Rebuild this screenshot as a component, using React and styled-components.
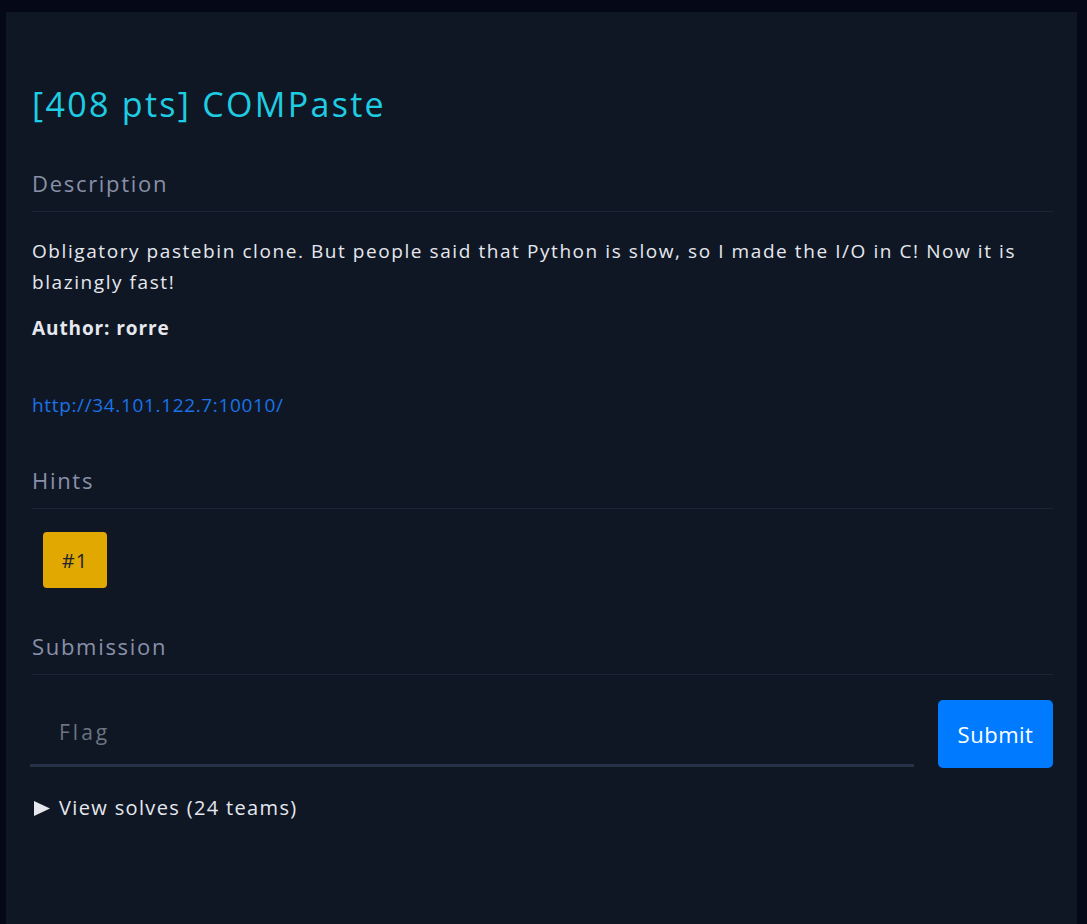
import React from "react";
import styled, { createGlobalStyle } from "styled-components";

const Global = createGlobalStyle`
  html, body { margin: 0; padding: 0; background: #050816; }
  body { font-family: "Open Sans", "Noto Sans", sans-serif; color: #e6e8ee; }
  * { box-sizing: border-box; }
`;

const Page = styled.div`
  padding: 12px 10px 0 6px;
  min-height: 924px;
  display: flex;
`;

const Panel = styled.div`
  flex: 1;
  background: #0f1725;
  padding: 70px 24px 40px 26px;
  min-height: 912px;
`;

const Title = styled.h1`
  margin: 0 0 43px;
  font-size: 34px;
  font-weight: 500;
  line-height: 44px;
  letter-spacing: 2.3px;
  color: #1fcde3;
`;

const SectionHead = styled.h3`
  margin: 0;
  padding-bottom: 14px;
  font-size: 22px;
  font-weight: 500;
  line-height: 28px;
  letter-spacing: 1.7px;
  color: #8a90a8;
  border-bottom: 1px solid #1b2336;
`;

const Body = styled.div`
  padding-top: ${(p) => p.$top}px;
  padding-bottom: ${(p) => p.$bottom}px;
`;

const Para = styled.p`
  margin: 0 0 15px;
  font-size: 19px;
  line-height: 31px;
  letter-spacing: 1.57px;
  color: #e6e8ee;
`;

const Bold = styled.p`
  margin: 0 0 46px;
  font-size: 19px;
  font-weight: 700;
  line-height: 31px;
  letter-spacing: 0.9px;
  color: #e6e8ee;
`;

const Link = styled.a`
  font-size: 19px;
  line-height: 31px;
  letter-spacing: 0.65px;
  color: #1a73e8;
  text-decoration: none;
`;

const HintRow = styled.div`
  display: flex;
  padding-left: 11px;
`;

const HintButton = styled.button`
  width: 64px;
  height: 56px;
  border: none;
  border-radius: 4px;
  background: #e0a800;
  color: #212529;
  font-family: inherit;
  font-size: 20px;
  letter-spacing: 1px;
`;

const FormRow = styled.div`
  display: flex;
  align-items: flex-start;
  gap: 24px;
`;

const FlagInput = styled.input`
  flex: 1;
  height: 67px;
  margin-left: -2px;
  background: transparent;
  border: none;
  border-bottom: 3px solid #243147;
  padding: 0 29px;
  font-family: inherit;
  font-size: 21px;
  letter-spacing: 3px;
  color: #e6e8ee;
  outline: none;
  &::placeholder { color: #6b7480; }
`;

const SubmitButton = styled.button`
  width: 115px;
  height: 68px;
  border: none;
  border-radius: 5px;
  background: #007bff;
  color: #ffffff;
  font-family: inherit;
  font-size: 22px;
  letter-spacing: 0.5px;
`;

const Solves = styled.div`
  margin-top: 26px;
  padding-left: 2px;
  font-size: 20px;
  line-height: 28px;
  letter-spacing: 1.35px;
  color: #e6e8ee;
  display: flex;
  align-items: center;
  gap: 9px;
`;

const Tri = styled.svg`
  width: 16px;
  height: 15px;
  fill: #e6e8ee;
`;

export default function App() {
  return (
    <>
      <Global />
      <Page>
        <Panel>
          <Title>[408 pts] COMPaste</Title>
          <SectionHead>Description</SectionHead>
          <Body $top={24} $bottom={45}>
            <Para>
              Obligatory pastebin clone. But people said that Python is slow, so I made the I/O in C! Now it is blazingly fast!
            </Para>
            <Bold>Author: rorre</Bold>
            <Link href="#">http://34.101.122.7:10010/</Link>
          </Body>
          <SectionHead>Hints</SectionHead>
          <Body $top={23} $bottom={44}>
            <HintRow>
              <HintButton>#1</HintButton>
            </HintRow>
          </Body>
          <SectionHead>Submission</SectionHead>
          <Body $top={25} $bottom={0}>
            <FormRow>
              <FlagInput placeholder="Flag" />
              <SubmitButton>Submit</SubmitButton>
            </FormRow>
            <Solves>
              <Tri viewBox="0 0 16 15"><path d="M0 0 L16 7.5 L0 15 Z" /></Tri>
              <span>View solves (24 teams)</span>
            </Solves>
          </Body>
        </Panel>
      </Page>
    </>
  );
}
